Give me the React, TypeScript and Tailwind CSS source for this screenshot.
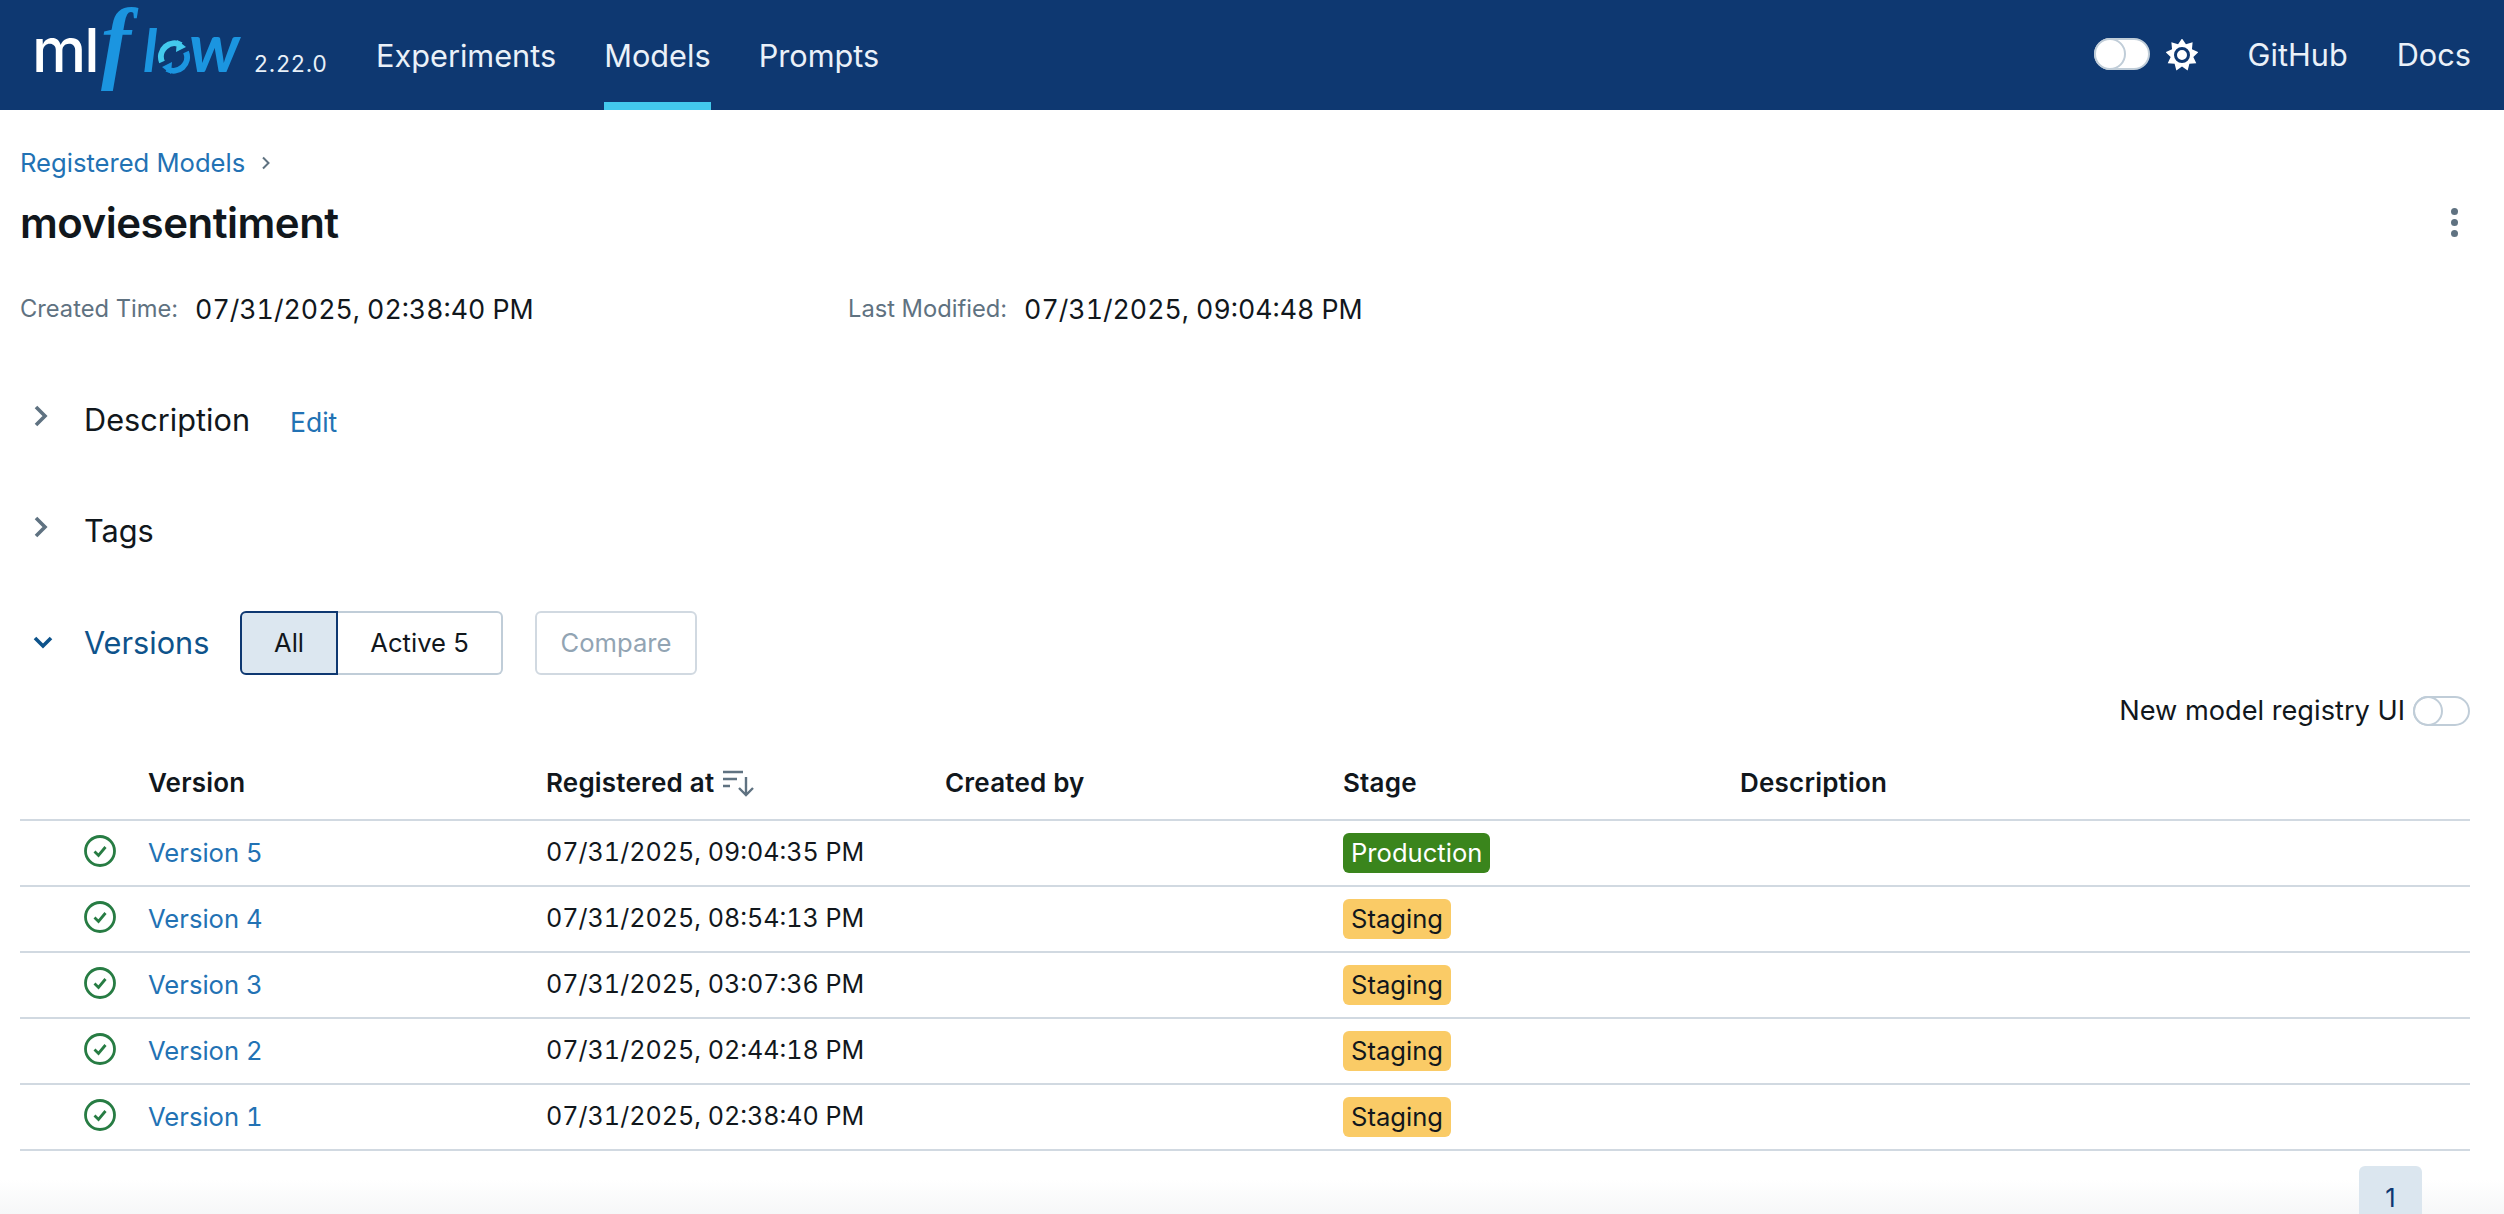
import React from "react";

const rows = [
  ["Version 5", "07/31/2025, 09:04:35 PM", "Production"],
  ["Version 4", "07/31/2025, 08:54:13 PM", "Staging"],
  ["Version 3", "07/31/2025, 03:07:36 PM", "Staging"],
  ["Version 2", "07/31/2025, 02:44:18 PM", "Staging"],
  ["Version 1", "07/31/2025, 02:38:40 PM", "Staging"],
];

const gridCols = "grid grid-cols-[128px_398px_399px_398px_397px_1fr]";

function Chevron({ down = false, color = "#5f7281" }: { down?: boolean; color?: string }) {
  return (
    <svg width="20" height="24" viewBox="0 0 20 24" fill="none" stroke={color} strokeWidth="3.6">
      {down ? <path d="M2 7l8 8 8-8" /> : <path d="M5 3l9 9-9 9" />}
    </svg>
  );
}

function Check() {
  return (
    <svg width="32" height="32" viewBox="0 0 32 32" fill="none" stroke="#277c43" strokeWidth="2.8">
      <circle cx="16" cy="16" r="14.5" />
      <path d="M10.5 16.5l4 4 7-8.5" />
    </svg>
  );
}

function Sun() {
  const pts: string[] = [];
  for (let i = 0; i < 18; i++) {
    const r = i % 2 === 0 ? 16.5 : 11.5;
    const a = (i * Math.PI) / 9 - Math.PI / 2;
    pts.push(`${16 + r * Math.cos(a)},${16 + r * Math.sin(a)}`);
  }
  return (
    <svg width="32" height="32" viewBox="0 0 32 32">
      <polygon points={pts.join(" ")} fill="#fff" />
      <circle cx="16" cy="16" r="6.5" fill="#fff" stroke="#0e3871" strokeWidth="3" />
    </svg>
  );
}

function Logo() {
  return (
    <div className="flex items-baseline self-start h-[110px] pl-[32px] w-[376px] shrink-0">
      <span className="text-white text-[61px] leading-none font-medium tracking-[-2px] w-[69px]">ml</span>
      <span className="[font-family:'Liberation_Serif',serif] text-[#1b95e0] text-[90px] italic leading-[84px] w-[42px] font-bold">f</span>
      <span className="[font-family:Lato,sans-serif] text-[#1b95e0] text-[60px] italic leading-none font-bold w-[14px]">l</span>
      <span className="w-[32px] h-[32px] shrink-0 self-center mt-[2px]">
        <svg width="34" height="34" viewBox="0 0 34 34" fill="none" strokeWidth="6">
          <path d="M5 22A13.5 13.5 0 0 1 24 5" stroke="#43c9ed" />
          <path d="M29 12A13.5 13.5 0 0 1 10 29" stroke="#1b95e0" />
          <path d="M20 0l9 7-10 5z" fill="#43c9ed" />
          <path d="M14 34l-9-7 10-5z" fill="#1b95e0" />
        </svg>
      </span>
      <span className="[font-family:Lato,sans-serif] text-[#1b95e0] text-[69px] italic leading-none font-bold w-[64px]">w</span>
      <span className="text-[#e8f0f8] text-[22.5px] tracking-[1px] ml-[1px]">2.22.0</span>
    </div>
  );
}

function Header() {
  return (
    <header className="h-[110px] bg-[#0e3871] flex items-center text-[#eaf1f9] text-[30.7px] shrink-0">
      <Logo />
      <nav className="flex h-full gap-[48px]">
        <a className="flex items-center pt-[3px]">Experiments</a>
        <a className="flex items-center border-b-[8px] border-[#43c9ed] pt-[11px]">Models</a>
        <a className="flex items-center pt-[3px]">Prompts</a>
      </nav>
      <div className="ml-auto flex items-center pr-[33px]">
        <div className="w-[56px] h-[32px] rounded-full bg-white border-[2px] border-[#c0cdd8] relative mr-[16px] mb-[1px]">
          <div className="absolute left-[-2px] top-[-2px] w-[32px] h-[32px] rounded-full bg-white border-[2px] border-[#c0cdd8]" />
        </div>
        <Sun />
        <a className="ml-[50px]">GitHub</a>
        <a className="ml-[49px]">Docs</a>
      </div>
    </header>
  );
}

function Section({ title, children }: { title: string; children?: React.ReactNode }) {
  return (
    <div className="flex items-center h-[64px]">
      <div className="w-[64px] pl-[11px] flex mb-[9px]">
        <Chevron />
      </div>
      <span className="text-[30.7px] text-[#11171c]">{title}</span>
      {children}
    </div>
  );
}

export default function App() {
  return (
    <div className="h-screen w-full overflow-hidden bg-white flex flex-col [font-family:Inter,sans-serif] text-[#11171c] relative">
      <Header />
      <main className="pl-[20px] pr-[34px] flex flex-col">
        <div className="flex items-center h-[30px] mt-[38px] text-[25.6px] text-[#2272b4]">
          <a>Registered Models</a>
          <svg className="ml-[15px]" width="12" height="16" viewBox="0 0 12 16" fill="none" stroke="#5f7281" strokeWidth="2">
            <path d="M3 2.5l5.5 5.5L3 13.5" />
          </svg>
        </div>
        <div className="flex items-center justify-between mt-[19px] h-[50px]">
          <h1 className="text-[42px] font-semibold tracking-[-0.5px]">moviesentiment</h1>
          <div className="flex flex-col gap-[4px] mr-[12px] w-[7px]">
            <span className="w-[7px] h-[7px] rounded-full bg-[#5f7281]" />
            <span className="w-[7px] h-[7px] rounded-full bg-[#5f7281]" />
            <span className="w-[7px] h-[7px] rounded-full bg-[#5f7281]" />
          </div>
        </div>
        <div className="flex items-center mt-[47px] h-[30px]">
          <div className="w-[828px] flex items-center">
            <span className="text-[23.7px] text-[#5f7281] mr-[17px]">Created Time:</span>
            <span className="text-[26.7px] tabular-nums">07/31/2025, 02:38:40 PM</span>
          </div>
          <span className="text-[23.7px] text-[#5f7281] mr-[17px]">Last Modified:</span>
          <span className="text-[26.7px] tabular-nums">07/31/2025, 09:04:48 PM</span>
        </div>
        <div className="mt-[64px]">
          <Section title="Description">
            <a className="text-[26.5px] text-[#2272b4] ml-[40px] mt-[6px]">Edit</a>
          </Section>
        </div>
        <div className="mt-[47px]">
          <Section title="Tags" />
        </div>
        <div className="flex items-center h-[64px] mt-[48px]">
          <div className="w-[64px] pl-[13px] flex">
            <Chevron down color="#0e538b" />
          </div>
          <span className="text-[30.7px] text-[#0e538b] w-[156px]">Versions</span>
          <div className="flex h-[64px] text-[25.6px] text-[#11171c]">
            <button className="w-[98px] bg-[#dce7f0] border-[2px] border-[#0e3871] rounded-l-[6px]">All</button>
            <button className="w-[165px] border-[2px] border-l-0 border-[#c0cdd8] rounded-r-[6px]">Active 5</button>
          </div>
          <button className="ml-[32px] w-[162px] h-[64px] text-[25.6px] text-[#92a4b3] border-[2px] border-[#d1d9e1] rounded-[6px]">Compare</button>
        </div>
        <div className="flex items-center justify-end h-[32px] mt-[20px] text-[27.2px]">
          <span>New model registry UI</span>
          <div className="w-[57px] h-[30px] rounded-full border-[2px] border-[#c0cdd8] relative ml-[8px]">
            <div className="absolute left-[-2px] top-[-2px] w-[30px] h-[30px] rounded-full border-[2px] border-[#c0cdd8]" />
          </div>
        </div>
        <div className={`${gridCols} items-center h-[85px] pt-[10px] border-b-[2px] border-[#d1d9e1] font-semibold text-[26px] tracking-[0.2px] mt-[9px]`}>
          <div />
          <div>Version</div>
          <div className="flex items-center">
            Registered at
            <svg className="ml-[8px]" width="32" height="28" viewBox="0 0 32 28" fill="none" stroke="#5f7281" strokeWidth="2.4">
              <path d="M1 3h20M1 10h14M1 17h7M24 8v18M17 19l7 7 7-7" />
            </svg>
          </div>
          <div>Created by</div>
          <div>Stage</div>
          <div>Description</div>
        </div>
        {rows.map(([v, d, s]) => (
          <div key={v} className={`${gridCols} items-center h-[66px] border-b-[2px] border-[#d1d9e1] text-[25.6px] tabular-nums`}>
            <div className="pl-[64px] flex mb-[4px]">
              <Check />
            </div>
            <a className="text-[#2272b4]">{v}</a>
            <div className="text-[25.1px]">{d}</div>
            <div />
            <div className="flex">
              <span className={`h-[40px] px-[8px] flex items-center rounded-[6px] ${s === "Production" ? "bg-[#3a851c] text-white" : "bg-[#facb66] text-[#11171c]"}`}>
                {s}
              </span>
            </div>
            <div />
          </div>
        ))}
      </main>
      <div className="absolute left-0 right-0 bottom-0 h-[34px] bg-gradient-to-b from-white to-[#f6f7f8]" />
      <div className="absolute left-[2359px] bottom-0 w-[63px] h-[48px] rounded-t-[6px] bg-[#dbe6ef] text-[#0e3871] text-[25.6px] flex justify-center pt-[16px] leading-[32px]">1</div>
    </div>
  );
}
